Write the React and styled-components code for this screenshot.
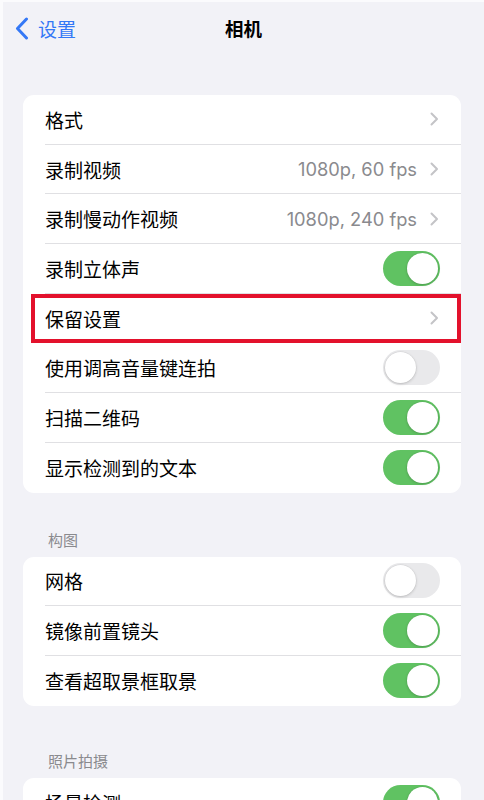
import styled, { createGlobalStyle } from 'styled-components'

const GlobalStyle = createGlobalStyle`
  html, body {
    margin: 0;
    padding: 0;
    background: #f2f2f7;
  }
  body {
    font-family: "Noto Sans CJK SC", "Noto Sans", sans-serif;
    -webkit-font-smoothing: antialiased;
  }
`

const Screen = styled.div`
  width: 484px;
  height: 800px;
  overflow: hidden;
  background: #f2f2f7;
  border-left: 3px solid #fbfbfd;
  border-top: 2px solid #fbfbfd;
  box-sizing: border-box;
`

const NavBar = styled.header`
  height: 52px;
  padding: 0 12px 6px;
  display: grid;
  grid-template-columns: 1fr auto 1fr;
  align-items: center;
`

const BackLink = styled.div`
  display: flex;
  align-items: center;
  gap: 9px;
  color: #3478f6;
  font-size: 19px;
  line-height: 1;
`

const Title = styled.h1`
  margin: 0;
  font-size: 18.5px;
  font-weight: 700;
  color: #000;
`

const Card = styled.section`
  margin: ${p => p.$top || 0}px 23px 0 20px;
  background: #fff;
  border-radius: 11px;
  overflow: hidden;
`

const Row = styled.div`
  position: relative;
  height: 49.7px;
  padding-left: 22px;
  display: flex;
`

const RowInner = styled.div`
  flex: 1;
  display: flex;
  align-items: center;
  padding-right: 22px;
  border-bottom: ${p => (p.$last ? 'none' : '1px solid #e0e0e3')};
`

const Label = styled.span`
  flex: 1;
  font-size: 19px;
  color: #000;
  white-space: nowrap;
`

const Value = styled.span`
  font-size: 18.3px;
  color: #8a8a8e;
  margin-right: 13px;
  font-family: "Inter", "Noto Sans", sans-serif;
`

const Highlight = styled.div`
  position: absolute;
  left: 8px;
  right: 0;
  top: 0;
  bottom: 0;
  border: 4px solid #e3112c;
  pointer-events: none;
`

const Track = styled.div`
  width: 57px;
  height: 35px;
  border-radius: 18px;
  box-sizing: border-box;
  background: ${p => (p.$on ? '#60c262' : '#e9e9eb')};
  display: flex;
  align-items: center;
  justify-content: ${p => (p.$on ? 'flex-end' : 'flex-start')};
  padding: 2px;
  margin-right: -1px;
`

const Knob = styled.div`
  width: 31px;
  height: 31px;
  border-radius: 50%;
  background: #fff;
  box-shadow: 0 1px 3px rgba(0, 0, 0, 0.18), 0 0 0 0.5px rgba(0, 0, 0, 0.06);
`

const SectionHeader = styled.div`
  margin: ${p => p.$top}px 0 0 0;
  padding: 0 45px;
  font-size: 15px;
  line-height: 20px;
  color: #8a8a8e;
`

function Chevron() {
  return (
    <svg width="9" height="14" viewBox="0 0 9 14">
      <path d="M1.5 1.5 L7 7 L1.5 12.5" fill="none" stroke="#c4c4c7" strokeWidth="2" strokeLinecap="round" strokeLinejoin="round" />
    </svg>
  )
}

function BackChevron() {
  return (
    <svg width="14" height="23" viewBox="0 0 14 23">
      <path d="M11.5 2 L2.5 11.5 L11.5 21" fill="none" stroke="#3478f6" strokeWidth="3" strokeLinecap="round" strokeLinejoin="round" />
    </svg>
  )
}

function Toggle({ on }) {
  return (
    <Track $on={on}>
      <Knob />
    </Track>
  )
}

function SettingRow({ label, value, toggle, last, highlighted }) {
  return (
    <Row>
      <RowInner $last={last}>
        <Label>{label}</Label>
        {toggle === undefined ? (
          <>
            {value && <Value>{value}</Value>}
            <Chevron />
          </>
        ) : (
          <Toggle on={toggle} />
        )}
      </RowInner>
      {highlighted && <Highlight />}
    </Row>
  )
}

const cameraRows = [
  { label: '格式' },
  { label: '录制视频', value: '1080p, 60 fps' },
  { label: '录制慢动作视频', value: '1080p, 240 fps' },
  { label: '录制立体声', toggle: true },
  { label: '保留设置', highlighted: true },
  { label: '使用调高音量键连拍', toggle: false },
  { label: '扫描二维码', toggle: true },
  { label: '显示检测到的文本', toggle: true },
]

const compositionRows = [
  { label: '网格', toggle: false },
  { label: '镜像前置镜头', toggle: true },
  { label: '查看超取景框取景', toggle: true },
]

const photoRows = [{ label: '场景检测', toggle: true }]

function Group({ rows }) {
  return rows.map((r, i) => <SettingRow key={r.label} {...r} last={i === rows.length - 1} />)
}

export default function App() {
  return (
    <>
      <GlobalStyle />
      <Screen>
        <NavBar>
          <BackLink>
            <BackChevron />
            设置
          </BackLink>
          <Title>相机</Title>
          <div />
        </NavBar>
        <Card $top={35}>
          <Group rows={cameraRows} />
        </Card>
        <SectionHeader $top={37}>构图</SectionHeader>
        <Card $top={7}>
          <Group rows={compositionRows} />
        </Card>
        <SectionHeader $top={45}>照片拍摄</SectionHeader>
        <Card $top={7}>
          <Group rows={photoRows} />
        </Card>
      </Screen>
    </>
  )
}
